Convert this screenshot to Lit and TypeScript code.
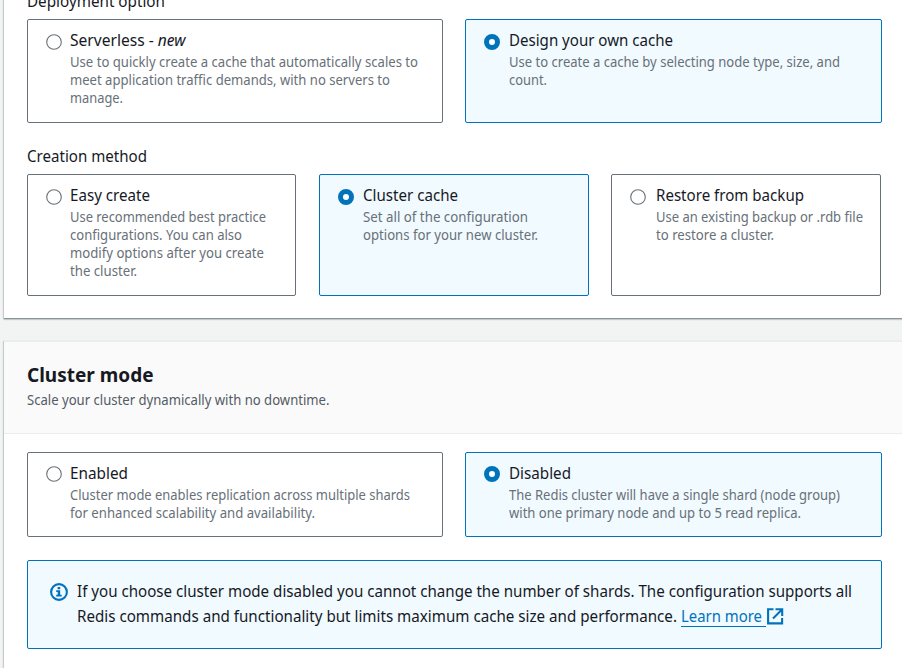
import { LitElement, html, css, svg } from "lit";
import { customElement, property } from "lit/decorators.js";

type Line = [text: string, width: number];
interface Option { title: string; titleWidth: number; tag?: string; lines: Line[]; selected?: boolean; }

const deployment: Option[] = [
  { title: "Serverless - ", titleWidth: 115.5, tag: "new", lines: [
    ["Use to quickly create a cache that automatically scales to", 348],
    ["meet application traffic demands, with no servers to", 320],
    ["manage.", 53]] },
  { title: "Design your own cache", titleWidth: 164, selected: true, lines: [
    ["Use to create a cache by selecting node type, size, and", 331], ["count.", 38]] },
];
const creation: Option[] = [
  { title: "Easy create", titleWidth: 80, lines: [
    ["Use recommended best practice", 196], ["configurations. You can also", 172],
    ["modify options after you create", 194], ["the cluster.", 67]] },
  { title: "Cluster cache", titleWidth: 95, selected: true, lines: [
    ["Set all of the configuration", 165], ["options for your new cluster.", 175]] },
  { title: "Restore from backup", titleWidth: 148, lines: [
    ["Use an existing backup or .rdb file", 207], ["to restore a cluster.", 118]] },
];
const mode: Option[] = [
  { title: "Enabled", titleWidth: 58, lines: [
    ["Cluster mode enables replication across multiple shards", 340],
    ["for enhanced scalability and availability.", 245]] },
  { title: "Disabled", titleWidth: 62, selected: true, lines: [
    ["The Redis cluster will have a single shard (node group)", 331],
    ["with one primary node and up to 5 read replica.", 292]] },
];

/* One line of text condensed to fill a given measure. */
@customElement("fit-text")
class FitText extends LitElement {
  @property({ type: Number }) width = 0;
  static styles = css`
    :host { display: block; white-space: pre; }
    span { display: inline-block; transform-origin: 0 50%; vertical-align: top; }
  `;
  async firstUpdated() {
    await document.fonts.ready;
    const span = this.renderRoot.querySelector("span") as HTMLElement;
    const natural = span.getBoundingClientRect().width;
    if (!natural) return;
    span.style.transform = `scaleX(${this.width / natural})`;
    span.style.marginRight = `${this.width - natural}px`;
  }
  render() { return html`<span><slot></slot></span>`; }
}

@customElement("option-tile")
class OptionTile extends LitElement {
  @property({ attribute: false }) option!: Option;
  static styles = css`
    :host { display: block; }
    .tile { box-sizing: border-box; height: 100%; border: 1px solid #687078; border-radius: 2px;
      padding: 9px 18px 0; display: flex; gap: 9px; background: #fff; }
    .selected { background: #f1faff; border-color: #0073bb; }
    svg { flex: none; width: 16px; height: 16px; margin-top: var(--radio-offset, 5px); }
    .title { font-size: 15.7px; line-height: 22px; padding-bottom: 2px; color: #16191f; }
    .desc { font-size: 13.5px; line-height: 18px; color: #687078; }
    .copy { min-width: 0; margin-left: var(--copy-offset, -0.6px); }
    .selected .copy { margin-left: 0; }
  `;
  render() {
    const o = this.option;
    return html`<div class="tile ${o.selected ? "selected" : ""}">
      <svg viewBox="0 0 16 16">${o.selected
        ? svg`<circle cx="8" cy="8" r="5.5" fill="#fff" stroke="#0073bb" stroke-width="5"/>`
        : svg`<circle cx="8" cy="8" r="7.3" fill="#fff" stroke="#687078" stroke-width="1.1"/>`}</svg>
      <div class="copy">
        <fit-text class="title" .width=${o.titleWidth}>${o.title}${o.tag ? html`<em>${o.tag}</em>` : ""}</fit-text>
        ${o.lines.map(([t, w]) => html`<fit-text class="desc" .width=${w}>${t}</fit-text>`)}
      </div></div>`;
  }
}

@customElement("app-root")
class AppRoot extends LitElement {
  static styles = css`
    :host { display: block; height: 668px; overflow: hidden; background: #f2f3f3;
      font-family: "Noto Sans", "Open Sans", sans-serif; color: #16191f; }
    .page { display: flex; flex-direction: column; gap: 22px; padding-left: 4px; }
    .panel { background: #fff; box-sizing: border-box; box-shadow: 0 1px 1px rgba(0,28,36,.16), -1px 0 1px rgba(0,28,36,.16); }
    .first { display: flow-root; height: 319px; padding-left: 23px; border-bottom: 1px solid #879596; }
    .second { height: 340px; border-top: 1px solid #eaeded; }
    .label { font-size: 15.5px; line-height: 22px; }
    .cut { margin-top: -10px; padding-bottom: 7px; }
    .creation { padding: 22px 0 7px; }
    .grid { display: grid; }
    .two { grid-template-columns: 416px 417px; column-gap: 22px; }
    .three { grid-template-columns: 269px 270px 270px; column-gap: 22.5px; }
    .three option-tile:last-child { --copy-offset: 0.5px; }
    .deploy { height: 104px; }
    .methods { height: 122px; }
    .modes { height: 85px; --radio-offset: 4px; }
    .header { box-sizing: border-box; height: 92px; padding: 19px 23px 0; background: #fafafa; border-bottom: 1px solid #eaeded; }
    .heading { font-size: 19.5px; font-weight: 700; line-height: 27px; padding-bottom: 1px; }
    .sub { font-size: 13.5px; line-height: 22px; color: #545b64; }
    .body { padding: 18px 0 0 23px; }
    .alert { box-sizing: border-box; margin-top: 23px; width: 855px; height: 89px; border: 1px solid #0073bb;
      border-radius: 2px; background: #f1faff; padding: 18px 22px; display: flex; gap: 9px; }
    .alert .info { width: 18px; height: 18px; flex: none; margin-top: 4px; }
    .message { font-size: 15.7px; line-height: 25px; }
    .row { display: flex; }
    .link { color: #0073bb; display: flex; margin-left: 4px; }
    .linktext { border-bottom: 1px solid #0073bb; width: 85px; margin-top: 1px; height: 21px; line-height: 23px; }
    .link svg { width: 17px; height: 17px; margin: 4px 0 0 1px; }
  `;
  tiles(options: Option[]) { return options.map((o) => html`<option-tile .option=${o}></option-tile>`); }
  render() {
    return html`<div class="page">
      <section class="panel first">
        <div class="label cut"><fit-text .width=${138}>Deployment option</fit-text></div>
        <div class="grid two deploy">${this.tiles(deployment)}</div>
        <div class="label creation"><fit-text .width=${120}>Creation method</fit-text></div>
        <div class="grid three methods">${this.tiles(creation)}</div>
      </section>
      <section class="panel second">
        <div class="header">
          <fit-text class="heading" .width=${126.5}>Cluster mode</fit-text>
          <fit-text class="sub" .width=${302.5}>Scale your cluster dynamically with no downtime.</fit-text>
        </div>
        <div class="body">
          <div class="grid two modes">${this.tiles(mode)}</div>
          <div class="alert">
            <svg class="info" viewBox="0 0 18 18" fill="none"><circle cx="9" cy="9" r="7.9" stroke="#0073bb" stroke-width="2.1"/>
              <path d="M7.6 4h2.6v2.2H7.6zM6.2 7.2h4v4.5h1.5v1.8H6.2v-1.8h1.5V9H6.2z" fill="#0073bb"/></svg>
            <div class="message">
              <fit-text .width=${775}>If you choose cluster mode disabled you cannot change the number of shards. The configuration supports all</fit-text>
              <div class="row"><fit-text .width=${600}>Redis commands and functionality but limits maximum cache size and performance.</fit-text>
                <span class="link"><fit-text class="linktext" .width=${81}>Learn more</fit-text>
                <svg viewBox="0 0 17 17" fill="none" stroke="#0073bb" stroke-width="2.1"><path d="M6.5 1.2H1.1v14.2h14V10M8.5 1.2h6.7v6.7M15 1.5L6 10.5"/></svg></span></div>
            </div>
          </div>
        </div>
      </section>
    </div>`;
  }
}
